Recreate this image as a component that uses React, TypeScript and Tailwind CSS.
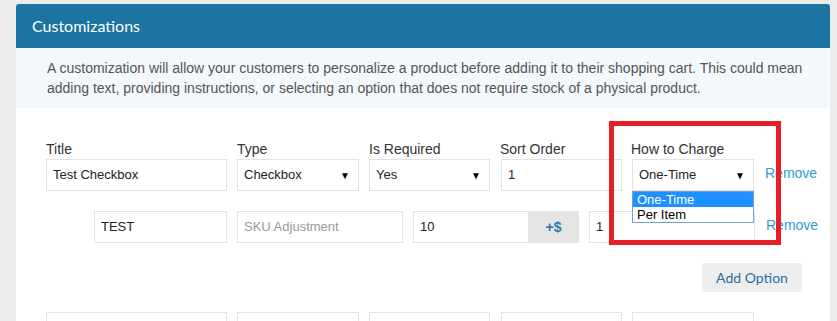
import React from "react";

const inputBox =
	"h-[32px] shrink-0 border border-[#e2e2e2] bg-white pl-[6px] pr-[8px] flex items-center text-[13px] text-[#222]";

function Select({ value, width, open }: { value: string; width: string; open?: boolean }) {
	return (
		<div className={`relative shrink-0 ${width}`}>
			<div className={`${inputBox} w-full justify-between`}>
				<span>{value}</span>
				<span className="text-[10px] text-black">▼</span>
			</div>
			{open && (
				<div className="absolute left-0 top-full z-10 w-full border border-[#7a9cd3] bg-white text-[13px] leading-[15px] text-black">
					<div className="bg-[#1e90ff] px-[4px] text-white">One-Time</div>
					<div className="px-[4px]">Per Item</div>
				</div>
			)}
		</div>
	);
}

function App() {
	const sans = { fontFamily: '"Liberation Sans", Arial, sans-serif' };

	return (
		<div className="min-h-screen overflow-hidden bg-[#ececec] pl-4 pt-1" style={sans}>
			<div className="relative w-[814px] rounded-t-[3px] bg-white">
				<div
					className="flex h-[44px] items-center rounded-t-[3px] bg-[#1c75a0] px-4 text-[16px] text-white"
					style={{ fontFamily: "Lato, sans-serif" }}>
					Customizations
				</div>
				<div className="bg-[#f3f8fc] py-[10px] pl-[31px] pr-[12px] text-[14px] leading-5 text-[#555]">
					A customization will allow your customers to personalize a product before adding it to their shopping cart. This could mean
					adding text, providing instructions, or selecting an option that does not require stock of a physical product.
				</div>

				<div className="pb-6 pl-[30px] pr-[15px] pt-[31px]">
					{/* customization 1 */}
					<div className="flex text-[14px] leading-5 text-[#333]">
						<div className="w-[191px] shrink-0">Title</div>
						<div className="w-[132px] shrink-0">Type</div>
						<div className="w-[131px] shrink-0">Is Required</div>
						<div className="w-[131px] shrink-0">Sort Order</div>
						<div className="shrink-0">How to Charge</div>
					</div>
					<div className="flex items-center">
						<div className={`${inputBox} w-[181px]`}>Test Checkbox</div>
						<div className="ml-[10px]">
							<Select value="Checkbox" width="w-[122px]" />
						</div>
						<div className="ml-[10px]">
							<Select value="Yes" width="w-[121px]" />
						</div>
						<div className={`${inputBox} ml-[11px] w-[121px]`}>1</div>
						<div className="ml-[10px]">
							<Select value="One-Time" width="w-[122px]" open />
						</div>
						<a className="ml-[11px] -mt-[3px] shrink-0 text-[14px] text-[#2f9ad8]">Remove</a>
					</div>

					{/* option row */}
					<div className="mt-[20px] flex items-center pl-[48px]">
						<div className={`${inputBox} w-[133px]`}>TEST</div>
						<div className={`${inputBox} ml-[10px] w-[166px] text-[#999]`}>SKU Adjustment</div>
						<div className="ml-[10px] flex shrink-0">
							<div className={`${inputBox} w-[115px] border-r-0`}>10</div>
							<div className="flex h-[32px] w-[51px] items-center justify-center bg-[#e4e4e4] text-[14px] font-bold text-[#2a7fae]">
								+$
							</div>
						</div>
						<div className={`${inputBox} ml-[10px] w-[166px]`}>1</div>
						<a className="ml-[11px] -mt-[3px] shrink-0 text-[14px] text-[#2f9ad8]">Remove</a>
					</div>

					<div className="mt-[20px] flex justify-end pr-[13px]">
						<button
							className="h-[29px] w-[100px] rounded-[3px] bg-[#ededed] text-[14px] text-[#2a6f9e]"
							style={{ fontFamily: "Lato, sans-serif" }}>
							Add Option
						</button>
					</div>

					{/* customization 2 */}
					<div className="mt-[20px] flex">
						<div className={`${inputBox} w-[181px]`}></div>
						<div className={`${inputBox} ml-[10px] w-[122px]`}></div>
						<div className={`${inputBox} ml-[10px] w-[121px]`}></div>
						<div className={`${inputBox} ml-[11px] w-[121px]`}></div>
						<div className={`${inputBox} ml-[10px] w-[122px]`}></div>
					</div>
				</div>

				{/* annotation */}
				<div className="pointer-events-none absolute left-[593px] top-[117px] h-[124px] w-[172px] border-[5px] border-[#e81c24]" />
			</div>
		</div>
	);
}

export default App;
